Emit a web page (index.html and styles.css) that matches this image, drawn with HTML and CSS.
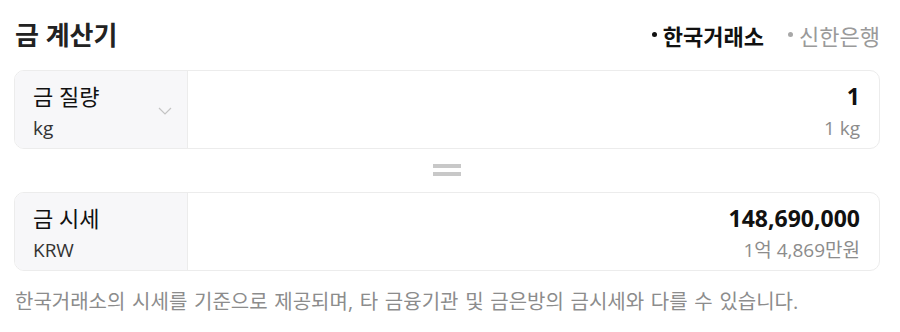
FILE: index.html
```html
<!DOCTYPE html>
<html lang="ko">
<head>
  <meta charset="UTF-8">
  <meta name="viewport" content="width=device-width, initial-scale=1.0">
  <title>금 계산기</title>
  <link rel="stylesheet" href="styles.css">
</head>
<body>
  <div class="calc">
    <div class="calc-head">
      <h1>금 계산기</h1>
      <div class="tabs">
        <span class="tab active">한국거래소</span>
        <span class="tab">신한은행</span>
      </div>
    </div>

    <div class="field">
      <div class="unit">
        <div class="unit-text">
          <div class="unit-name">금 질량</div>
          <div class="unit-sub">kg</div>
        </div>
        <svg class="chevron" width="14" height="8" viewBox="0 0 14 8">
          <path d="M1 1l6 6 6-6" fill="none" stroke="#c4c4c4" stroke-width="1.2"/>
        </svg>
      </div>
      <div class="amount">
        <div class="amount-main">1</div>
        <div class="amount-sub">1 kg</div>
      </div>
    </div>

    <div class="equals"><span></span><span></span></div>

    <div class="field">
      <div class="unit">
        <div class="unit-text">
          <div class="unit-name">금 시세</div>
          <div class="unit-sub">KRW</div>
        </div>
      </div>
      <div class="amount">
        <div class="amount-main">148,690,000</div>
        <div class="amount-sub">1억 4,869만원</div>
      </div>
    </div>

    <p class="note">한국거래소의 시세를 기준으로 제공되며, 타 금융기관 및 금은방의 금시세와 다를 수 있습니다.</p>
  </div>
</body>
</html>
```

FILE: styles.css
```css
:root {
  --text: #111111;
  --muted: #8c8c8c;
  --line: #ececec;
  --side: #f7f7f9;
}
body {
  margin: 0;
  font-family: 'Open Sans', 'Noto Sans CJK KR', sans-serif;
  color: var(--text);
  background: #ffffff;
}
.calc {
  padding: 0 20px 0 14px;
}
.calc-head {
  display: flex;
  align-items: center;
  justify-content: space-between;
  height: 68px;
}
h1 {
  margin: 0 0 0 1px;
  font-size: 26px;
  font-weight: 700;
  color: #222;
}
.tabs {
  display: flex;
  gap: 24px;
  padding-top: 1px;
}
.tab {
  font-size: 22px;
  color: #9a9a9a;
  display: flex;
  align-items: center;
}
.tab::before {
  content: '';
  width: 5px;
  height: 5px;
  border-radius: 50%;
  background: #a8a8a8;
  margin-right: 6px;
}
.tab.active {
  color: #111;
  font-weight: 700;
}
.tab.active::before { background: #111; }
.field {
  display: flex;
  height: 77px;
  border: 1px solid var(--line);
  border-radius: 10px;
  overflow: hidden;
  margin-top: 2px;
}
.unit {
  width: 173px;
  background: var(--side);
  border-right: 1px solid var(--line);
  display: flex;
  align-items: center;
  justify-content: space-between;
  padding: 0 15px 0 18px;
  box-sizing: border-box;
  flex-shrink: 0;
}
.unit-text { padding-top: 6px; }
.unit-name {
  font-size: 22px;
  line-height: 30px;
}
.unit-sub {
  font-size: 19px;
  line-height: 34px;
  color: #333;
}
.chevron { margin-top: 2px; }
.amount {
  flex: 1;
  text-align: right;
  padding: 6px 19px 0;
  display: flex;
  flex-direction: column;
  justify-content: center;
}
.amount-main {
  font-size: 23px;
  font-weight: 700;
  line-height: 30px;
}
.amount-sub {
  font-size: 19px;
  line-height: 34px;
  color: var(--muted);
}
.equals {
  height: 41px;
  display: flex;
  flex-direction: column;
  align-items: center;
  justify-content: center;
  gap: 4px;
}
.equals span {
  width: 28px;
  height: 4px;
  background: #c8c8c8;
}
.note {
  margin: 15px 0 0 1px;
  font-size: 20px;
  word-spacing: 1.5px;
  color: var(--muted);
}
```
